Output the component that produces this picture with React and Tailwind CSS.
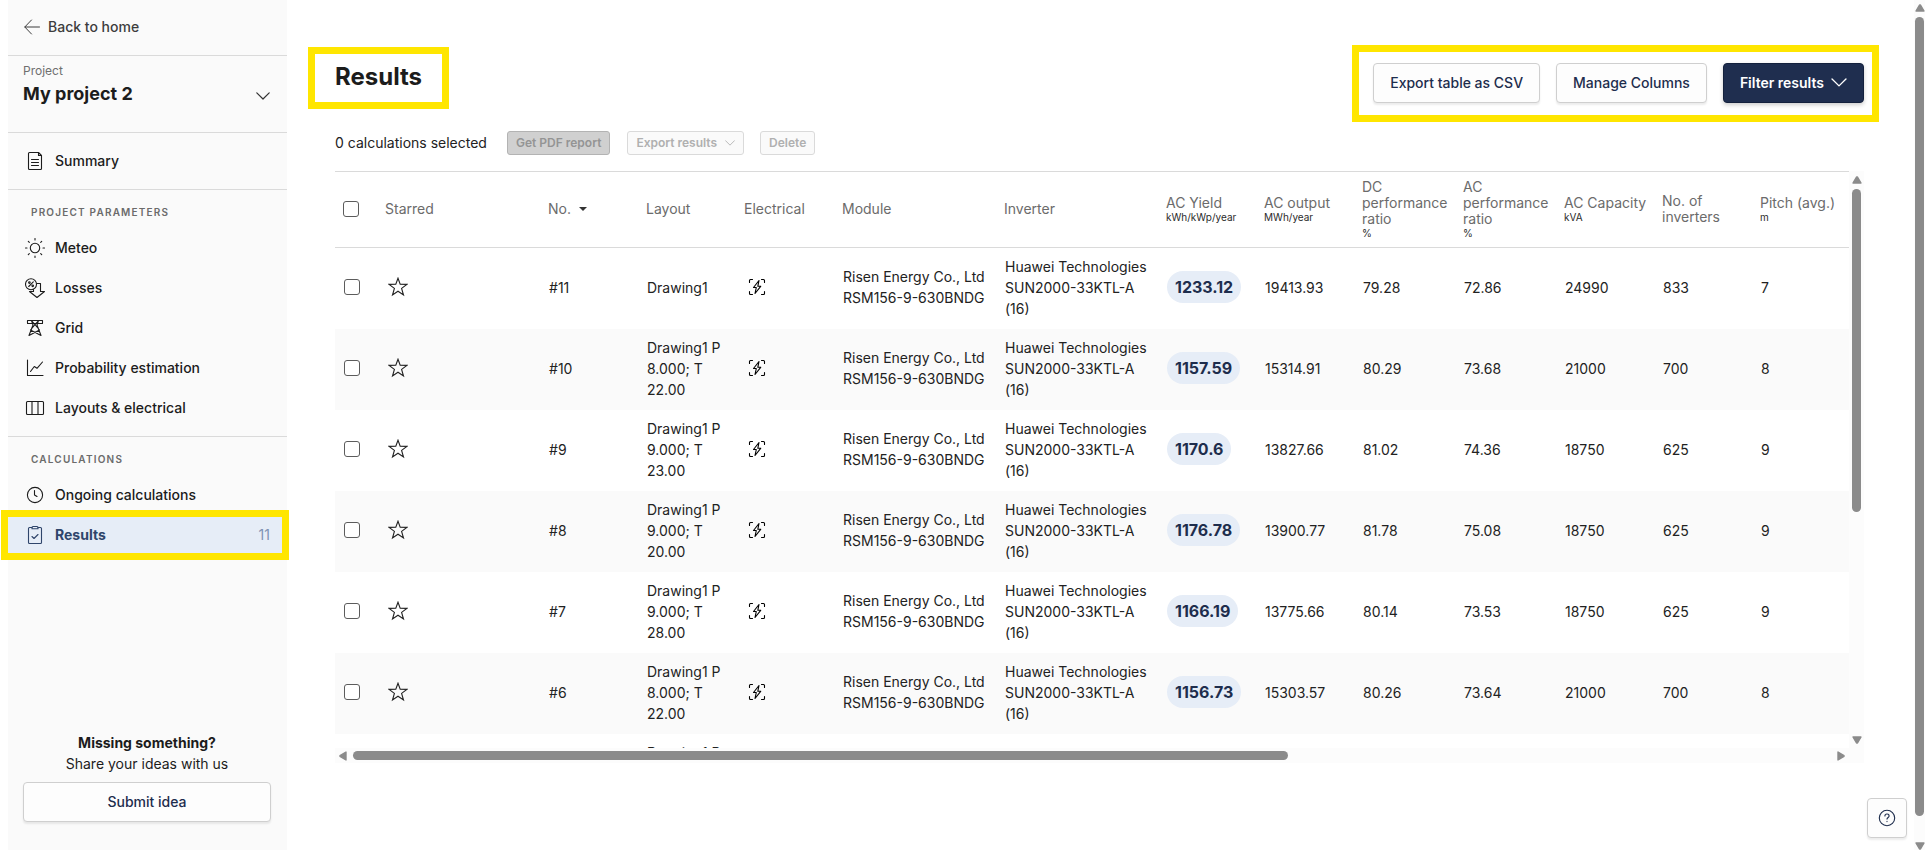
import React from "react";

const rows = [
  ["11", "Drawing1", "1233.12", "19413.93", "79.28", "72.86", "24990", "833", "7"],
  ["10", "Drawing1 P 8.000; T 22.00", "1157.59", "15314.91", "80.29", "73.68", "21000", "700", "8"],
  ["9", "Drawing1 P 9.000; T 23.00", "1170.6", "13827.66", "81.02", "74.36", "18750", "625", "9"],
  ["8", "Drawing1 P 9.000; T 20.00", "1176.78", "13900.77", "81.78", "75.08", "18750", "625", "9"],
  ["7", "Drawing1 P 9.000; T 28.00", "1166.19", "13775.66", "80.14", "73.53", "18750", "625", "9"],
  ["6", "Drawing1 P 8.000; T 22.00", "1156.73", "15303.57", "80.26", "73.64", "21000", "700", "8"],
];

const metrics = [
  ["AC Yield", "kWh/kWp/year"],
  ["AC output", "MWh/year"],
  ["DC performance ratio", "%"],
  ["AC performance ratio", "%"],
  ["AC Capacity", "kVA"],
  ["No. of inverters", ""],
  ["Pitch (avg.)", "m"],
];

function Icon({ children, className = "size-5" }) {
  return (
    <svg viewBox="0 0 20 20" fill="none" stroke="currentColor" strokeWidth="1.1" strokeLinecap="round" strokeLinejoin="round" className={`shrink-0 ${className}`} aria-hidden="true">
      {children}
    </svg>
  );
}

const Chevron = ({ className }) => (
  <svg viewBox="0 0 14 8" fill="none" stroke="currentColor" strokeLinecap="round" strokeLinejoin="round" className={`shrink-0 ${className}`} aria-hidden="true">
    <path d="M0.8 0.8 7 7l6.2-6.2" strokeWidth="1.2" />
  </svg>
);

const icons = {
  summary: (
    <Icon>
      <path d="M3.500 2.500a1 1 0 0 1 1-1h9l3 3v13a1 1 0 0 1-1 1h-11a1 1 0 0 1-1-1zM13.500 1.500v3h3M6.500 8.500h7M6.500 11.500h7M6.500 14.500h7" />
    </Icon>
  ),
  meteo: (
    <Icon>
      <circle cx="10" cy="10" r="4.700" />
      <path d="M10 .5V2M10 18v1.500M.5 10H2M18 10h1.500M3.300 3.300l1 1M15.700 15.700l1 1M16.700 3.300l-1 1M4.300 15.700l-1 1" />
    </Icon>
  ),
  losses: (
    <Icon>
      <circle cx="6" cy="6.200" r="5.500" />
      <path d="m8.300 3.900-4.600 4.600" />
      <circle cx="4.400" cy="4.600" r=".8" />
      <circle cx="7.700" cy="7.800" r=".8" />
      <path d="M12 5.500h3.500v8h4l-7.500 6-7.500-6H8.500v-2" />
    </Icon>
  ),
  grid: (
    <Icon>
      <path d="M2.500 5V2.500h15V5M2.500 5.500h15M6.500 2.500 8 7 4 17.500M13.500 2.500 12 7l4 10.500M6.500 2.500l8 9.500-10.500 5.500M13.500 2.500 5.500 12 16 17.500" />
    </Icon>
  ),
  chart: (
    <Icon>
      <path d="M2.500 2v15.500H18M5.500 13.500l3.800-5 2.700 1.800 5.500-6.300" />
    </Icon>
  ),
  layouts: (
    <Icon>
      <rect x="1.500" y="3.500" width="17" height="13" rx="1" />
      <path d="M7 3.500v13M13 3.500v13" />
    </Icon>
  ),
  clock: (
    <Icon>
      <circle cx="10" cy="10" r="7.600" />
      <path d="M9.500 5.500v4.500l2.500 1.500" />
    </Icon>
  ),
  results: (
    <Icon>
      <path d="M7 2.500H4.500a1 1 0 0 0-1 1v14a1 1 0 0 0 1 1h11a1 1 0 0 0 1-1v-14a1 1 0 0 0-1-1H13M7 11.500l2 2 4-4" />
      <path d="M7 3.800V2.500q0-1 1-1h4q1 0 1 1v1.300z" />
    </Icon>
  ),
};

function NavItem({ icon, label, active, count }) {
  return (
    <a href="#" aria-current={active ? "page" : undefined} className={`flex h-10 items-center gap-[10px] px-[17px] text-[14px] leading-5 ${active ? "bg-[#e6edf7] font-bold text-[#2f456b]" : "font-medium text-[#1c1c1c]"}`}>
      {icons[icon]}
      <span className="grow">{label}</span>
      {count && <span className="font-normal text-[#7f93b3]">{count}</span>}
    </a>
  );
}

const NavHeading = ({ children }) => (
  <h2 className="pl-[23px] text-[10px] leading-4 font-semibold tracking-[1.2px] text-[#6b6b6b]">{children}</h2>
);

const Check = ({ label }) => (
  <input type="checkbox" aria-label={label} className="block size-4 appearance-none rounded-[3px] border border-[#5c5c5c] bg-white" />
);

const Star = () => (
  <Icon className="size-5">
    <path strokeLinejoin="miter" d="m10 1.200 2.200 6.100 6.700.1-5.300 4 1.900 6.600-5.500-3.800L4.500 18l1.900-6.600-5.300-4 6.700-.1z" />
  </Icon>
);

const Bolt = () => (
  <Icon className="size-5 text-black">
    <path d="M2.500 5.500v-2a1 1 0 0 1 1-1h2M14.500 2.500h2a1 1 0 0 1 1 1v2M17.500 14.500v2a1 1 0 0 1-1 1h-2M5.500 17.500h-2a1 1 0 0 1-1-1v-2M12 3.500 6.500 10.500h2.800L8 16.500l5.700-7.200h-2.900z" />
  </Icon>
);

const Arrow = ({ d, className }) => (
  <svg viewBox="0 0 10 8" fill="#8b8b8b" stroke="#8b8b8b" strokeWidth="1.4" strokeLinejoin="round" className={`shrink-0 ${className}`} aria-hidden="true">
    <path d={d} />
  </svg>
);
const UP = "M1 7 4.500 1h1L9 7z";
const DOWN = "M1 1l3.500 6h1L9 1z";

const whiteButton = "h-10 rounded-[4px] border border-[#cfcfcf] bg-[#fdfdfd] px-4 pb-px text-[14px] font-medium text-[#1e2d4d] shadow-[0_2px_2px_rgba(0,0,0,0.08)]";
const smallButton = "flex h-6 items-center rounded-[3px] border px-2 text-[12px] font-semibold";

function Sidebar() {
  return (
    <aside className="ml-2 flex w-[279px] shrink-0 flex-col bg-[#fafafa]">
      <a href="#" className="flex h-14 items-center gap-2 border-b border-[#dadada] pb-[2px] pl-4 text-[14px] font-medium text-[#3d3d3d]">
        <svg viewBox="0 0 16 16" fill="none" stroke="currentColor" strokeLinecap="round" strokeLinejoin="round" className="size-4" aria-hidden="true">
          <path d="M15.500 8H.8M7.500 1 .8 8l6.700 7" />
        </svg>
        Back to home
      </a>
      <button type="button" className="flex h-[77px] items-start justify-between border-b border-[#dadada] pt-[6px] pr-[17px] pl-[15px] text-left">
        <span className="flex flex-col">
          <span className="text-[12px] leading-[18px] text-[#6f6f6f]">Project</span>
          <span className="text-[18px] leading-7 font-bold text-[#1c1c1c]">My project 2</span>
        </span>
        <Chevron className="mt-[30px] h-2 w-[14px] text-[#333]" />
      </button>
      <nav aria-label="Project" className="flex flex-col">
        <div className="border-b border-[#dadada] py-2">
          <NavItem icon="summary" label="Summary" />
        </div>
        <div className="border-b border-[#dadada] pt-[14px] pb-2">
          <NavHeading>PROJECT PARAMETERS</NavHeading>
          <div className="pt-2">
            <NavItem icon="meteo" label="Meteo" />
            <NavItem icon="losses" label="Losses" />
            <NavItem icon="grid" label="Grid" />
            <NavItem icon="chart" label="Probability estimation" />
            <NavItem icon="layouts" label="Layouts & electrical" />
          </div>
        </div>
        <div className="pt-[14px]">
          <NavHeading>CALCULATIONS</NavHeading>
          <div className="pt-2">
            <NavItem icon="clock" label="Ongoing calculations" />
            <div className="relative">
              <NavItem icon="results" label="Results" active count="11" />
              <div className="pointer-events-none absolute -top-[5px] -right-[2px] -bottom-[5px] -left-[7px] border-[7px] border-[#ffe600]" />
            </div>
          </div>
        </div>
      </nav>
      <div className="mt-auto flex flex-col items-center pr-4 pb-7 pl-[15px] text-[14px] leading-[21px] text-[#1c1c1c]">
        <strong className="font-bold">Missing something?</strong>
        <span className="mb-2">Share your ideas with us</span>
        <button type="button" className={`w-full ${whiteButton}`}>Submit idea</button>
      </div>
    </aside>
  );
}

function ResultsTable() {
  return (
    <table className="w-full min-w-[1515px] table-fixed border-collapse text-left">
      <colgroup>
        <col className="w-[42px]" />
        <col className="w-[163px]" />
        <col className="w-[98px]" />
        <col className="w-[98px]" />
        <col className="w-[98px]" />
        <col className="w-[162px]" />
        <col className="w-[162px]" />
        <col className="w-[98px]" />
        <col className="w-[98px]" />
        <col className="w-[101px]" />
        <col className="w-[101px]" />
        <col className="w-[98px]" />
        <col className="w-[98px]" />
        <col className="w-[98px]" />
      </colgroup>
      <thead>
        <tr className="h-[76px] border-y border-[#dadada] text-[14px] leading-4 text-[#6b6b6b] [&>th]:pt-0 [&>th]:pr-0 [&>th]:pb-[2px] [&>th]:pl-2 [&>th]:font-normal">
          <th><Check label="Select all calculations" /></th>
          <th>Starred</th>
          <th aria-sort="descending">
            <span className="flex items-center gap-2">
              No.
              <svg viewBox="0 0 8 4" className="h-1 w-2 fill-[#333]" aria-hidden="true"><path d="M0 0h8L4 4z" /></svg>
            </span>
          </th>
          <th>Layout</th>
          <th>Electrical</th>
          <th>Module</th>
          <th>Inverter</th>
          {metrics.map(([name, unit]) => (
            <th key={name}>
              {name}
              {unit && <span className="block text-[10px] leading-3 text-[#2b2b2b]">{unit}</span>}
            </th>
          ))}
        </tr>
      </thead>
      <tbody className="text-[14px] leading-[21px] text-[#222]">
        {rows.map(([no, layout, acYield, ...values]) => (
          <tr key={no} className="h-[81px] even:bg-[#fafafa] [&>td]:pt-0 [&>td]:pr-0 [&>td]:pb-[2px] [&>td]:pl-[9px]">
            <td><Check label={`Select calculation ${no}`} /></td>
            <td>
              <button type="button" aria-label={`Star calculation ${no}`} className="block pb-px pl-[2px]"><Star /></button>
            </td>
            <td>#{no}</td>
            <td><div className="w-20">{layout}</div></td>
            <td><div className="pb-px pl-[2px]"><Bolt /></div></td>
            <td>Risen Energy Co., Ltd RSM156-9-630BNDG</td>
            <td>Huawei Technologies SUN2000-33KTL-A (16)</td>
            <td>
              <span className="inline-block rounded-full bg-[#e6edf7] px-2 py-1 text-[16px] leading-6 font-bold text-[#1e2d4d]">{acYield}</span>
            </td>
            {values.map((value, i) => (
              <td key={metrics[i + 1][0]}>{value}</td>
            ))}
          </tr>
        ))}
        <tr className="h-[81px]">
          <td colSpan={3} />
          <td className="pb-[2px] pl-[9px]"><div className="w-20">Drawing1 P 8.000; T 23.00</div></td>
          <td colSpan={10} />
        </tr>
      </tbody>
    </table>
  );
}

export default function App() {
  return (
    <div className="flex min-h-screen bg-white font-['Inter',sans-serif]">
      <Sidebar />
      <main className="flex min-w-0 grow flex-col pt-[45px] pr-[50px] pl-12">
        <header className="flex items-start justify-between">
          <div className="mt-[2px] -ml-[27px] border-[7px] border-[#ffe600] px-5 pt-[9px] pb-[11px]">
            <h1 className="text-[24px] leading-7 font-bold text-[#1c1c1c]">Results</h1>
          </div>
          <div className="-mr-[15px] flex gap-4 border-[7px] border-[#ffe600] pt-[11px] pr-2 pb-3 pl-[14px]">
            <button type="button" className={whiteButton}>Export table as CSV</button>
            <button type="button" className={whiteButton}>Manage Columns</button>
            <button type="button" className="flex h-10 items-center gap-[7px] rounded-[4px] border border-[#14213d] bg-[#1f2e4f] px-4 pb-px text-[14px] font-semibold text-white shadow-[0_2px_4px_rgba(0,0,0,0.2)]">
              Filter results
              <Chevron className="h-[9px] w-4" />
            </button>
          </div>
        </header>
        <div className="flex items-center pt-[9px] text-[14px] text-[#222]">
          <p className="mr-5 pb-[2px]">0 calculations selected</p>
          <button type="button" disabled className={`mr-[17px] border-[#b3b3b3] bg-[#d0d0d0] text-[#949494] ${smallButton}`}>Get PDF report</button>
          <button type="button" disabled className={`mr-4 gap-2 border-[#dadada] bg-[#fafafa] text-[#b0b0b0] ${smallButton}`}>
            Export results
            <Chevron className="h-[6px] w-[10px]" />
          </button>
          <button type="button" disabled className={`border-[#dadada] bg-[#fafafa] text-[#b0b0b0] ${smallButton}`}>Delete</button>
        </div>
        <div className="mt-4 flex h-[577px]">
          <div className="min-w-0 grow overflow-hidden">
            <ResultsTable />
          </div>
          <div className="flex w-[15px] shrink-0 flex-col items-center bg-[#fcfcfc] pt-[5px] pb-1">
            <Arrow d={UP} className="h-2 w-[10px]" />
            <div className="mt-[5px] h-[323px] w-[9px] rounded-full bg-[#8b8b8b]" />
            <Arrow d={DOWN} className="mt-auto h-2 w-[10px]" />
          </div>
        </div>
        <div className="flex h-[15px] items-center bg-[#fcfcfc] pr-[18px] pl-[3px]">
          <Arrow d={UP} className="h-2 w-[10px] -rotate-90" />
          <div className="mr-auto ml-[5px] h-[9px] w-[62%] rounded-full bg-[#8b8b8b]" />
          <Arrow d={UP} className="h-2 w-[10px] rotate-90" />
        </div>
      </main>
      <button type="button" aria-label="Help" className="fixed right-[18px] bottom-3 flex h-10 w-10 items-center justify-center rounded-[4px] border border-[#cfcfcf] bg-[#fdfdfd] text-[#1e2d4d] shadow-[0_2px_2px_rgba(0,0,0,0.08)]">
        <Icon className="size-5">
          <circle cx="10" cy="10" r="7.700" />
          <path d="M7.900 8q0-2 2.100-2t2.100 1.900c0 1.500-2.100 1.600-2.100 3.200M10 13.400v.2" />
        </Icon>
      </button>
      <div className="flex w-[11px] shrink-0 flex-col items-center bg-[#fcfcfc] pt-1">
        <Arrow d={UP} className="h-2 w-[10px]" />
        <div className="mt-[5px] mb-[26px] w-[9px] grow rounded-full bg-[#8b8b8b]" />
        <Arrow d={DOWN} className="h-2 w-[10px]" />
      </div>
    </div>
  );
}
